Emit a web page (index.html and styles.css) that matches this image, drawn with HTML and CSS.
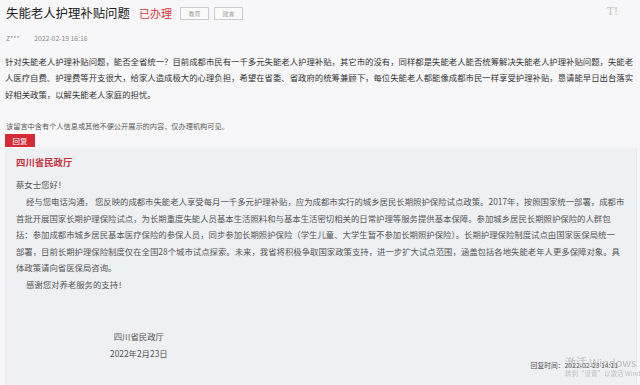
FILE: index.html
```html
<!DOCTYPE html>
<html lang="zh-CN">
<head>
    <meta charset="UTF-8">
    <title>失能老人护理补贴问题</title>
    <link rel="stylesheet" href="styles.css">
</head>
<body>
<div class="page">
    <div class="head">
        <h1 class="title">失能老人护理补贴问题</h1>
        <span class="state">已办理</span>
        <span class="tag">教育</span>
        <span class="tag">建言</span>
        <span class="font-tool">T!</span>
    </div>
    <div class="meta">
        <span class="user">Z***</span>
        <span class="time">2022-02-19 16:16</span>
    </div>
    <p class="content">针对失能老人护理补贴问题，能否全省统一？目前成都市民有一千多元失能老人护理补贴，其它市的没有，同样都是失能老人能否统筹解决失能老人护理补贴问题，失能老<br>人医疗自费、护理费等开支很大，给家人造成极大的心理负担，希望在省委、省政府的统筹兼顾下，每位失能老人都能像成都市民一样享受护理补贴，恳请能早日出台落实<br>好相关政策，以解失能老人家庭的担忧。</p>
    <p class="notice">该留言中含有个人信息或其他不便公开展示的内容，仅办理机构可见。</p>
    <span class="reply-btn">回复</span>
    <div class="reply">
        <div class="org">四川省民政厅</div>
        <p class="greet">蔡女士您好！</p>
        <p class="answer">经与您电话沟通， 您反映的成都市失能老人享受每月一千多元护理补贴，应为成都市实行的城乡居民长期照护保险试点政策。2017年，按照国家统一部署，成都市<br>首批开展国家长期护理保险试点，为长期重度失能人员基本生活照料和与基本生活密切相关的日常护理等服务提供基本保障。参加城乡居民长期照护保险的人群包<br>括：参加成都市城乡居民基本医疗保险的参保人员，同步参加长期照护保险（学生儿童、大学生暂不参加长期照护保险）。长期护理保险制度试点由国家医保局统一<br>部署，目前长期护理保险制度仅在全国28个城市试点探索。未来，我省将积极争取国家政策支持，进一步扩大试点范围，涵盖包括各地失能老年人更多保障对象。具<br>体政策请向省医保局咨询。</p>
        <p class="answer">感谢您对养老服务的支持！</p>
        <div class="sign">
            <div>四川省民政厅</div>
            <div>2022年2月23日</div>
        </div>
        <div class="reply-time">回复时间：2022-02-23 14:11</div>
    </div>
</div>
<div class="watermark">
    <div class="wm-big">激活 Windows</div>
    <div class="wm-small">转到“设置”以激活 Windows。</div>
</div>
</body>
</html>
```

FILE: styles.css
```css
* {
    margin: 0;
    padding: 0;
}
html, body {
    background: #f7f7f9;
}
body {
    font-family: "Noto Sans CJK SC", "Liberation Sans", sans-serif;
    color: #333;
    overflow: hidden;
}
.page {
    padding: 4px 4px 0 5px;
}
.head {
    display: flex;
    align-items: center;
    height: 18px;
}
.title {
    font-size: 12.4px;
    font-weight: normal;
    color: #222;
    line-height: 18px;
    margin-left: 1px;
}
.state {
    font-size: 11px;
    color: #d9343c;
    margin-left: 9px;
    margin-right: 3px;
}
.tag {
    font-size: 6px;
    color: #999;
    border: 1px solid #ccc;
    background: #fafafa;
    width: 27px;
    height: 11px;
    line-height: 11px;
    text-align: center;
    margin-left: 5px;
}
.font-tool {
    margin-left: auto;
    margin-right: 18px;
    font-family: "Liberation Serif", serif;
    font-size: 12px;
    color: #c4c4c4;
    align-self: flex-start;
    margin-top: 0;
}
.meta {
    margin-top: 10px;
    font-size: 6.8px;
    line-height: 12px;
    color: #888;
    padding-left: 1px;
}
.meta .time {
    margin-left: 13px;
}
.content {
    margin-top: 8.6px;
    font-size: 8.4px;
    line-height: 16.7px;
    white-space: nowrap;
    color: #333;
}
.notice {
    margin-top: 17px;
    font-size: 7.2px;
    line-height: 12px;
    color: #555;
    padding-left: 1px;
}
.reply-btn {
    display: block;
    margin-top: 2px;
    width: 30px;
    height: 13px;
    line-height: 13px;
    background: #d42b37;
    color: #fff;
    font-size: 7.4px;
    text-align: center;
}
.reply {
    margin-top: 1px;
    width: 620px;
    height: 240px;
    background: #eef0f4;
    padding: 7px 0 0 11px;
    border-right: 1px solid #e6e8ec;
}
.org {
    font-size: 9.4px;
    font-weight: bold;
    color: #c8303c;
    line-height: 14px;
    margin-bottom: 7.7px;
}
.greet, .answer {
    font-size: 8.4px;
    line-height: 16.6px;
    color: #555;
    white-space: nowrap;
}
.answer {
    text-indent: 10px;
}
.sign {
    margin-top: 35px;
    margin-left: 94px;
    display: inline-block;
    text-align: center;
    font-size: 8.4px;
    line-height: 17px;
    color: #555;
}
.reply-time {
    margin-top: -2px;
    padding-right: 18px;
    text-align: right;
    font-size: 6.8px;
    line-height: 10px;
    color: #555;
}
.watermark {
    position: fixed;
    left: 565px;
    top: 355px;
    white-space: nowrap;
    color: rgba(150, 150, 150, 0.55);
}
.wm-big {
    font-size: 11px;
    line-height: 14px;
}
.wm-small {
    font-size: 6.5px;
    line-height: 9px;
}
```
